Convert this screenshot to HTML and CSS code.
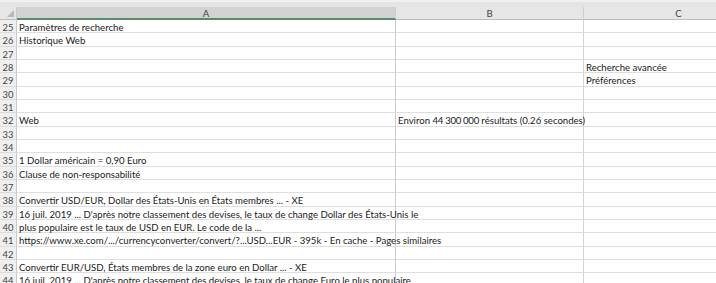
FILE: index.html
```html
<!DOCTYPE html>
<html>
<head>
    <title>Feuille</title>
    <link rel="stylesheet" href="styles.css">
</head>
<body>
    <div class="topStrip"></div>
    <div class="sheet">
        <div class="row headRow">
            <div class="corner"><span class="cornerMark"></span></div>
            <div class="colHead colA selected">A</div>
            <div class="colHead colB">B</div>
            <div class="colHead colC">C</div>
        </div>

        <div class="row"><div class="num">25</div><div class="cell colA">Paramètres de recherche</div><div class="cell colB"></div><div class="cell colC"></div></div>
        <div class="row"><div class="num">26</div><div class="cell colA">Historique Web</div><div class="cell colB"></div><div class="cell colC"></div></div>
        <div class="row"><div class="num">27</div><div class="cell colA"></div><div class="cell colB"></div><div class="cell colC"></div></div>
        <div class="row"><div class="num">28</div><div class="cell colA"></div><div class="cell colB"></div><div class="cell colC">Recherche avancée</div></div>
        <div class="row"><div class="num">29</div><div class="cell colA"></div><div class="cell colB"></div><div class="cell colC">Préférences</div></div>
        <div class="row"><div class="num">30</div><div class="cell colA"></div><div class="cell colB"></div><div class="cell colC"></div></div>
        <div class="row"><div class="num">31</div><div class="cell colA"></div><div class="cell colB"></div><div class="cell colC"></div></div>
        <div class="row"><div class="num">32</div><div class="cell colA">Web</div><div class="cell colB">Environ <span class="digits">44 300 000</span> résultats (0.26 secondes)</div><div class="cell colC"></div></div>
        <div class="row"><div class="num">33</div><div class="cell colA"></div><div class="cell colB"></div><div class="cell colC"></div></div>
        <div class="row"><div class="num">34</div><div class="cell colA"></div><div class="cell colB"></div><div class="cell colC"></div></div>
        <div class="row"><div class="num">35</div><div class="cell colA">1 Dollar américain = 0,90 Euro</div><div class="cell colB"></div><div class="cell colC"></div></div>
        <div class="row"><div class="num">36</div><div class="cell colA">Clause de non-responsabilité</div><div class="cell colB"></div><div class="cell colC"></div></div>
        <div class="row"><div class="num">37</div><div class="cell colA"></div><div class="cell colB"></div><div class="cell colC"></div></div>
        <div class="row"><div class="num">38</div><div class="cell colA">Convertir USD/EUR, Dollar des États-Unis en États membres ... - XE</div><div class="cell colB"></div><div class="cell colC"></div></div>
        <div class="row"><div class="num">39</div><div class="cell colA">16 juil. 2019 ... D'après notre classement des devises, le taux de change Dollar des États-Unis le</div><div class="cell colB"></div><div class="cell colC"></div></div>
        <div class="row"><div class="num">40</div><div class="cell colA">plus populaire est le taux de USD en EUR. Le code de la ...</div><div class="cell colB"></div><div class="cell colC"></div></div>
        <div class="row"><div class="num">41</div><div class="cell colA overflow">https://www.xe.com/.../currencyconverter/convert/?...USD...EUR - 395k - En cache - Pages similaires</div><div class="cell colB"></div><div class="cell colC"></div></div>
        <div class="row"><div class="num">42</div><div class="cell colA"></div><div class="cell colB"></div><div class="cell colC"></div></div>
        <div class="row"><div class="num">43</div><div class="cell colA">Convertir EUR/USD, États membres de la zone euro en Dollar ... - XE</div><div class="cell colB"></div><div class="cell colC"></div></div>
        <div class="row"><div class="num">44</div><div class="cell colA">16 juil. 2019 ... D'après notre classement des devises, le taux de change Euro le plus populaire</div><div class="cell colB"></div><div class="cell colC"></div></div>
    </div>
</body>
</html>
```
FILE: styles.css
```css
body {
    margin: 0;
    background-color: #ffffff;
    font-family: Lato, "Liberation Sans", sans-serif;
    font-size: 9.6px;
    color: #1a1a1a;
    overflow: hidden;
}

.topStrip {
    height: 6.67px;
    box-sizing: border-box;
    background-color: #e4e4e4;
    border-top: 2px solid #f0f0f0;
}

/* the sheet is cut at the window edge, column C runs on past it */
.sheet {
    width: 716px;
    height: 276.33px;
    overflow: hidden;
}

.row {
    display: flex;
    height: 13.333px;
}

.headRow {
    background-color: #e6e6e6;
}

.corner,
.num {
    width: 17px;
    flex: none;
    box-sizing: border-box;
    border-right: 1px solid #c9c9c9;
}

.corner {
    position: relative;
    border-bottom: 1px solid #bdbdbd;
}

.cornerMark {
    position: absolute;
    right: 2px;
    bottom: 2px;
    width: 0;
    height: 0;
    border-left: 7px solid transparent;
    border-bottom: 7px solid #b8b8b8;
}

.num {
    background-color: #efefef;
    border-bottom: 1px solid #dcdcdc;
    color: #444444;
    text-align: center;
    padding-top: 1px;
    line-height: 13px;
    font-size: 9.4px;
}

.colA {
    width: 379px;
}

.colB {
    width: 188px;
}

.colC {
    width: 190px;
}

.colA,
.colB,
.colC {
    flex-shrink: 0;
    box-sizing: border-box;
}

.colHead {
    text-align: center;
    padding-top: 1px;
    line-height: 12px;
    color: #444444;
    border-right: 1px solid #cfcfcf;
    border-bottom: 1px solid #bdbdbd;
}

.selected {
    background-color: #d2d2d2;
    border-bottom: 2px solid #5b8a6e;
}

.cell {
    border-right: 1px solid #d4d4d4;
    border-bottom: 1px solid #dedede;
    padding-left: 2px;
    padding-top: 1px;
    line-height: 13px;
    white-space: nowrap;
}

.cell.colA {
    border-right-color: #cccccc;
}

.digits {
    letter-spacing: -0.3px;
}

.overflow {
    overflow: visible;
    position: relative;
    z-index: 1;
}
```
